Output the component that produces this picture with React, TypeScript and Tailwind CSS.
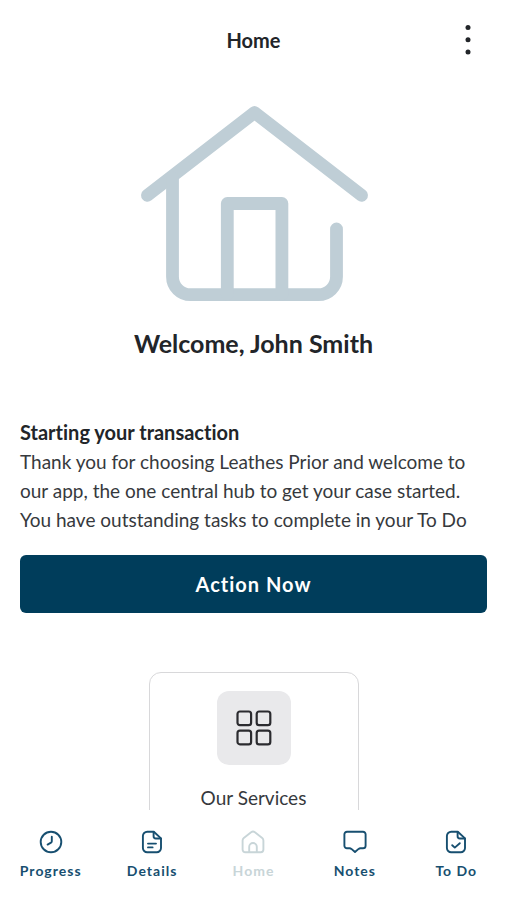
import type { ReactNode } from 'react';

const navItems = [
  { name: 'Progress', href: '#progress', icon: <ClockIcon /> },
  { name: 'Details', href: '#details', icon: <DetailsIcon /> },
  { name: 'Home', href: '#home', icon: <HomeIcon />, active: true },
  { name: 'Notes', href: '#notes', icon: <NotesIcon /> },
  { name: 'To Do', href: '#todo', icon: <TodoIcon /> },
];

function NavIcon({ children }: { children: ReactNode }) {
  return (
    <svg
      className="size-6"
      viewBox="0 0 24 24"
      fill="none"
      stroke="currentColor"
      strokeWidth="1.9"
      strokeLinecap="round"
      strokeLinejoin="round"
      aria-hidden="true"
    >
      {children}
    </svg>
  );
}

function ClockIcon() {
  return (
    <NavIcon>
      <circle cx="12" cy="12" r="10.3" />
      <path d="M12.8 6.8v4.4q0 .9-.8 1.4l-3.4 2" />
    </NavIcon>
  );
}

function DetailsIcon() {
  return (
    <NavIcon>
      <path d="M7.2 1.7h6.6L21 8.4V18a4.3 4.3 0 0 1-4.3 4.3H7.2A4.3 4.3 0 0 1 2.9 18V6a4.3 4.3 0 0 1 4.3-4.3z" />
      <path d="M13.6 2v4.3a2.2 2.2 0 0 0 2.2 2.2h5M8 13.6h8M8 17.4h4.6" />
    </NavIcon>
  );
}

function HomeIcon() {
  return (
    <NavIcon>
      <path d="M1.6 10.6q0-1.6 1.2-2.7l7.3-5.7q1.9-1.3 3.8 0l7.3 5.7q1.2 1.1 1.2 2.7v9a2.7 2.7 0 0 1-2.7 2.7H4.3a2.7 2.7 0 0 1-2.7-2.7z" />
      <path d="M8.2 22v-5.2a3.8 3.8 0 0 1 7.6 0V22" />
    </NavIcon>
  );
}

function NotesIcon() {
  return (
    <NavIcon>
      <path d="M4 1.7h16a2.6 2.6 0 0 1 2.6 2.6v11.4a2.6 2.6 0 0 1-2.6 2.6h-2.6q-1 0-1.8.6L12 22l-3.6-3.1q-.8-.6-1.8-.6H4a2.6 2.6 0 0 1-2.6-2.6V4.3A2.6 2.6 0 0 1 4 1.7z" />
    </NavIcon>
  );
}

function TodoIcon() {
  return (
    <NavIcon>
      <path d="M7.2 1.7h6.6L21 8.4V18a4.3 4.3 0 0 1-4.3 4.3H7.2A4.3 4.3 0 0 1 2.9 18V6a4.3 4.3 0 0 1 4.3-4.3z" />
      <path d="M13.6 2v4.3a2.2 2.2 0 0 0 2.2 2.2h5M8.2 15.2l2.6 2.4 5-4.4" />
    </NavIcon>
  );
}

const HouseLogo = () => (
  <svg
    className="w-[228px]"
    viewBox="0 0 228 198"
    fill="none"
    stroke="#bfced6"
    strokeWidth="12.8"
    strokeLinecap="round"
    strokeLinejoin="round"
    aria-hidden="true"
  >
    <path d="M7.5 91.3 114.5 8.5l107 82.8" />
    <path d="M32.5 74v98.7a18 18 0 0 0 18 18h128a18 18 0 0 0 18-18V125" />
    <path d="M87.3 190V99.5h54.6V190" />
  </svg>
);

const App = () => {
  return (
    <div className="flex h-dvh flex-col bg-white font-['Lato',sans-serif] text-[#222529] [font-variant-ligatures:none]">
      {/* Header */}
      <header className="grid h-20 shrink-0 grid-cols-[1fr_auto_1fr] items-center px-5">
        <h1 className="col-start-2 text-xl font-bold">Home</h1>
        <button type="button" aria-label="More options" className="justify-self-end p-1">
          <svg className="h-8 w-8" viewBox="0 0 32 32" fill="currentColor" aria-hidden="true">
            <circle cx="17" cy="3.5" r="2.5" />
            <circle cx="17" cy="15.7" r="2.5" />
            <circle cx="17" cy="27.9" r="2.5" />
          </svg>
        </button>
      </header>

      {/* Content */}
      <main className="min-h-0 flex-1 overflow-hidden px-5 pt-6">
        <section className="flex flex-col items-center">
          <HouseLogo />
          <h2 className="mt-6 text-[25px] font-bold leading-[34px]">Welcome, John Smith</h2>
        </section>

        <section className="mt-[58px]">
          <h3 className="text-xl font-bold leading-[29px]">Starting your transaction</h3>
          <p className="text-[19px] leading-[29px] text-[#36393d]">
            Thank you for choosing Leathes Prior and welcome to our app, the one central hub to get
            your case started. You have outstanding tasks to complete in your To Do
          </p>
        </section>

        <button
          type="button"
          className="mt-[21px] h-[58px] w-full rounded-md bg-[#003d5b] text-xl font-bold tracking-wider text-white"
        >
          Action Now
        </button>

        <a
          href="#services"
          className="mx-auto mt-[59px] flex w-[210px] flex-col items-center rounded-xl border border-[#d8d8da] px-4 pt-[18px] pb-10"
        >
          <span className="flex size-[74px] items-center justify-center rounded-xl bg-[#e9e9eb]">
            <svg
              className="size-9"
              viewBox="0 0 36 36"
              fill="none"
              stroke="#2b2b2f"
              strokeWidth="2.2"
              aria-hidden="true"
            >
              <rect x="1.5" y="1.5" width="13.6" height="13.6" rx="2.4" />
              <rect x="20.7" y="1.5" width="13.6" height="13.6" rx="2.4" />
              <rect x="1.5" y="20.7" width="13.6" height="13.6" rx="2.4" />
              <rect x="20.7" y="20.7" width="13.6" height="13.6" rx="2.4" />
            </svg>
          </span>
          <span className="mt-[18px] text-[19px] leading-[29px] text-[#36393d]">Our Services</span>
        </a>
      </main>

      {/* Bottom navigation */}
      <nav className="grid h-[90px] shrink-0 grid-cols-5 bg-white pt-5">
        {navItems.map((item) => (
          <a
            key={item.name}
            href={item.href}
            aria-current={item.active ? 'page' : undefined}
            className={`flex flex-col items-center gap-[7px] ${item.active ? 'text-[#c8d5d8]' : 'text-[#174f70]'}`}
          >
            {item.icon}
            <span className="text-sm leading-5 font-bold tracking-[1px]">{item.name}</span>
          </a>
        ))}
      </nav>
    </div>
  );
};

export default App;
